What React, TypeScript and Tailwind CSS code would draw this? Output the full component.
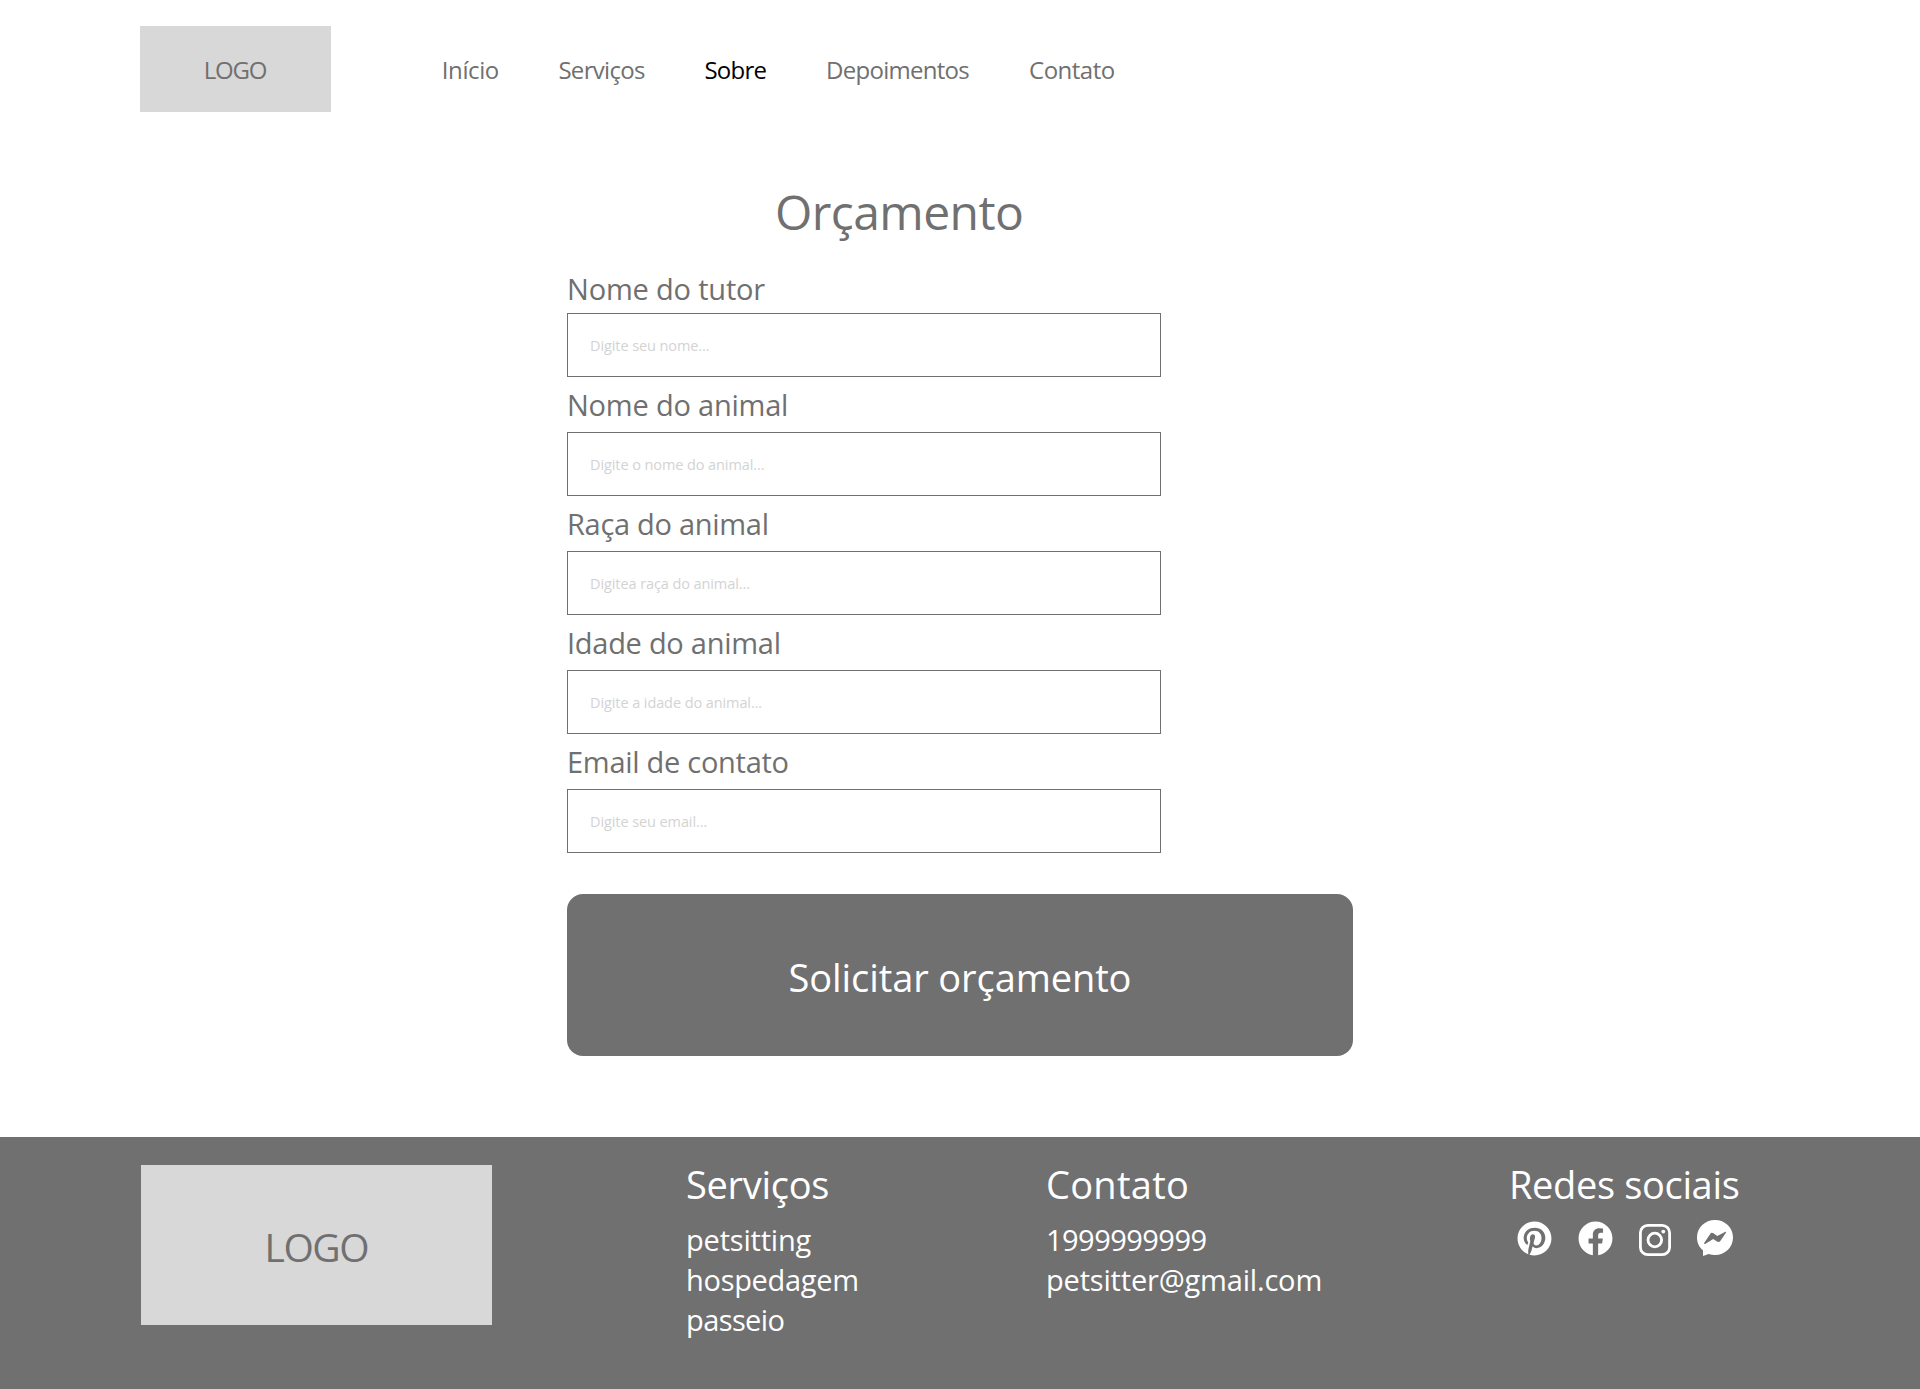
import React from "react";
import { FaFacebook, FaPinterest } from "react-icons/fa";

const navItems = [
  { label: "Início", style: "w-[116.6px] tracking-[-0.41px] text-[#707070]" },
  { label: "Serviços", style: "w-[146px] tracking-[-0.7px] text-[#707070]" },
  { label: "Sobre", style: "w-[121.7px] tracking-[-0.76px] text-black" },
  { label: "Depoimentos", style: "w-[203px] tracking-[-0.74px] text-[#707070]" },
  { label: "Contato", style: "tracking-[-0.51px] text-[#707070]" },
];

const fields = [
  { label: "Nome do tutor", hint: "Digite seu nome...", gap: "mt-[5px]", track: "tracking-[-0.19px]" },
  { label: "Nome do animal", hint: "Digite o nome do animal...", gap: "mt-2", track: "tracking-[-0.21px]" },
  { label: "Raça do animal", hint: "Digitea raça do animal...", gap: "mt-2", track: "tracking-[-0.29px]" },
  { label: "Idade do animal", hint: "Digite a idade do animal...", gap: "mt-2", track: "tracking-[-0.27px]" },
  { label: "Email de contato", hint: "Digite seu email...", gap: "mt-2", track: "tracking-[-0.28px]" },
];

function InstagramIcon() {
  return (
    <svg className="mt-[3px] h-8 w-8" viewBox="0 0 32 32" fill="none" stroke="currentColor">
      <rect x="1.4" y="1.4" width="29.2" height="29.2" rx="7.4" strokeWidth="2.8" />
      <circle cx="15.8" cy="16" r="6.8" strokeWidth="2.8" />
      <circle cx="24.3" cy="7.6" r="1.9" fill="currentColor" stroke="none" />
    </svg>
  );
}

function MessengerIcon() {
  return (
    <svg className="-mt-px h-9 w-9" viewBox="0 0 36 36" fill="currentColor">
      <path d="M18 0C8 0 0 7.6 0 17.4C0 22.8 2.3 27.200 6 30.300V36L11.700 33.900C13.700 34.600 15.800 34.900 18 34.900C28 34.900 36 27.300 36 17.400C36 7.600 28 0 18 0Z" />
      <path
        className="fill-[#707070]"
        d="M7.300 22.800L13.200 13.900Q14.500 12 16.400 13.300L20.200 16L28 11.900Q29.700 11.200 28.900 12.800L23.500 20.700Q22 22.700 20 21.500L16.200 18.900L8.600 23.700Q6.500 24.500 7.300 22.800Z"
      />
    </svg>
  );
}

export default function App() {
  return (
    <div className="flex h-[1389px] w-[1920px] flex-col overflow-hidden bg-white font-['Open_Sans','Noto_Sans',sans-serif] whitespace-nowrap text-[#707070]">
      <header className="flex h-[112px] shrink-0 pt-[26px] pl-[140px] text-2xl leading-[87px]">
        <div className="h-[86px] w-[191px] bg-[#d8d8d8] pl-[63.800px] text-2xl leading-[87px] tracking-[-1.25px]">
          LOGO
        </div>
        <nav className="ml-[110.800px] flex text-2xl leading-[87px]">
          {navItems.map((item) => (
            <a key={item.label} className={item.style}>
              {item.label}
            </a>
          ))}
        </nav>
      </header>

      <main className="h-[1025px] shrink-0 pt-[67px] pl-[567px]">
        <h1 className="pl-[208px] text-[48px] leading-[65px] tracking-[-0.57px]">Orçamento</h1>
        <form className="mt-[25px] flex flex-col">
          {fields.map((field) => (
            <label key={field.label} className="mb-2 block w-[594px]">
              <span className={`block text-[29px] leading-[39px] ${field.track}`}>{field.label}</span>
              <input
                placeholder={field.hint}
                className={`${field.gap} block h-16 w-[594px] border border-[#707070] bg-white pl-[22px] text-[14.5px] tracking-[-0.09px] placeholder:text-[#d3d3d3] placeholder:opacity-100`}
              />
            </label>
          ))}
          <button
            type="button"
            className="mt-[33px] h-[162px] w-[786px] rounded-2xl bg-[#707070] pt-1 text-center text-[38px] leading-[52px] tracking-[-0.1px] text-white"
          >
            Solicitar orçamento
          </button>
        </form>
      </main>

      <footer className="flex h-[252px] shrink-0 bg-[#707070] pt-[21px] pl-[141px] text-white">
        <div className="mt-[7px] h-[160px] w-[351px] bg-[#d8d8d8] pl-[123.500px] text-[39px] leading-[163px] tracking-[-1.47px] text-[#707070]">
          LOGO
        </div>
        <section className="ml-[194px] w-[360px]">
          <h2 className="text-[38px] leading-[52px] tracking-[-0.29px]">Serviços</h2>
          <ul className="mt-[9.500px] text-[29px] leading-10">
            <li className="tracking-[-0.2px]">petsitting</li>
            <li className="tracking-[-0.3px]">hospedagem</li>
            <li className="tracking-[-0.6px]">passeio</li>
          </ul>
        </section>
        <section className="w-[463px]">
          <h2 className="text-[38px] leading-[52px] tracking-[0.28px]">Contato</h2>
          <p className="mt-[9.500px] text-[29px] leading-10 tracking-[-0.53px]">1999999999</p>
          <p className="text-[29px] leading-10 tracking-[-0.18px]">petsitter@gmail.com</p>
        </section>
        <section>
          <h2 className="text-[38px] leading-[52px] tracking-[-0.35px]">Redes sociais</h2>
          <div className="mt-[11px] ml-2 flex items-start">
            <FaPinterest className="h-[35px] w-[35px]" />
            <FaFacebook className="ml-[26px] h-[35px] w-[35px]" />
            <div className="ml-[26px]">
              <InstagramIcon />
            </div>
            <div className="ml-[26px]">
              <MessengerIcon />
            </div>
          </div>
        </section>
      </footer>
    </div>
  );
}
